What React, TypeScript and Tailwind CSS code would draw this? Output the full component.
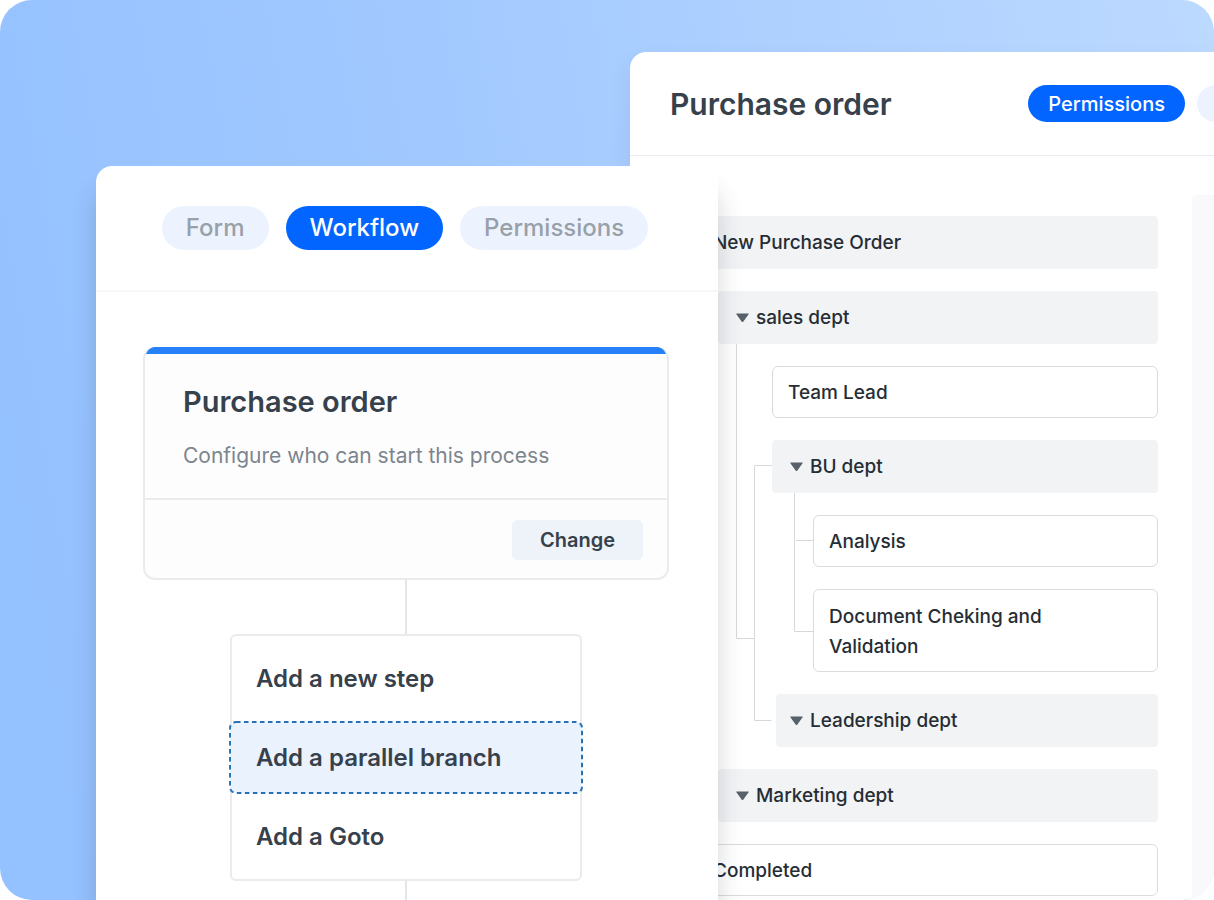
import { useState } from 'react';
import type { ReactNode } from 'react';

const tabs = ['Form', 'Workflow', 'Permissions'];
const stepOptions = ['Add a new step', 'Add a parallel branch', 'Add a Goto'];

const Caret = () => (
  <svg width="13" height="10" viewBox="0 0 13 10" className="shrink-0 text-[#586069]" aria-hidden="true">
    <path d="M0.8 0.4h11.4c.5 0 .7.5.4.9L7.2 8.7c-.4.5-1 .5-1.4 0L.4 1.3C.1.9.3.4.8.4z" fill="currentColor" />
  </svg>
);

const DeptRow = ({ name, inset = false }: { name: string; inset?: boolean }) => (
  <button
    className={`flex h-[53px] items-center gap-[7px] rounded bg-[#f1f3f5] text-left ${
      inset ? 'ml-1 pl-3.5' : 'w-full pl-[18px]'
    }`}
  >
    <Caret />
    <span className="pt-0.5">{name}</span>
  </button>
);

const StepRow = ({ children }: { children: ReactNode }) => (
  <div className="flex min-h-[52px] items-center rounded-md border border-[#d9dcde] bg-white px-[15px] pt-0.5">
    {children}
  </div>
);

// elbow lines that tie the departments below "sales dept" together
const TreeLines = () => (
  <svg
    width="96"
    height="380"
    viewBox="0 0 96 380"
    fill="none"
    stroke="#d5d9db"
    className="absolute top-0 left-0"
    aria-hidden="true"
  >
    <path d="M18.5 0v294.500h18" />
    <path d="M54 121.500h-17.500v255h17" />
    <path d="M76.500 149v138.500h19M78 196.500h17" />
  </svg>
);

function WorkflowPanel() {
  const [tab, setTab] = useState('Workflow');
  const [selected, setSelected] = useState('Add a parallel branch');

  return (
    <section className="z-10 col-start-2 col-end-4 row-start-1 mt-[166px] flex flex-col rounded-t-2xl bg-white shadow-[0_24px_24px_rgba(50,55,65,0.2)]">
      <nav className="flex justify-center gap-[17px] border-b-2 border-[#f6f7f8] pt-10 pr-1 pb-10">
        {tabs.map(name => (
          <button
            key={name}
            onClick={() => setTab(name)}
            className={`h-11 rounded-full px-6 text-2xl font-medium ${
              tab === name ? 'bg-[#0365ff] text-white' : 'bg-[#edf3fe] text-[#98a0a8]'
            }`}
          >
            {name}
          </button>
        ))}
      </nav>

      <div className="flex flex-1 flex-col items-center pt-[55px] pr-[49px] pl-[47px]">
        <article className="w-full overflow-hidden rounded-xl border-2 border-t-0 border-[#e9ebec] bg-[#fdfdfd]">
          <div className="-mx-0.5 h-[7px] bg-[#2680f8]" />
          <div className="border-b-2 border-[#e9ebec] px-[38px] pt-7 pb-[26px]">
            <h2 className="text-[29px] leading-10 font-semibold text-[#36414b]">Purchase order</h2>
            <p className="mt-[18px] text-[21px] leading-8 text-[#7c858d]">Configure who can start this process</p>
          </div>
          <div className="flex justify-end px-6 pt-5 pb-[18px]">
            <button className="h-10 rounded-md bg-[#edf3f9] px-7 text-xl font-semibold text-[#36414b]">
              Change
            </button>
          </div>
        </article>

        <div className="h-[54px] w-0.5 bg-[#e3e5e6]" />

        <div className="flex w-[352px] flex-col gap-1.5 rounded-md border-2 border-[#e9ebec] bg-white py-1.5">
          {stepOptions.map(option => (
            <button
              key={option}
              onClick={() => setSelected(option)}
              className="relative -mx-[3px] flex h-[73px] items-center px-[27px] text-left text-2xl font-semibold text-[#36414b]"
            >
              {selected === option && (
                <svg className="absolute inset-0 size-full" aria-hidden="true">
                  <rect
                    x="1"
                    y="1"
                    rx="6"
                    className="h-[calc(100%-2px)] w-[calc(100%-2px)]"
                    fill="#eaf2fe"
                    stroke="#2a70bd"
                    strokeWidth="2"
                    strokeDasharray="4.500 3.500"
                  />
                </svg>
              )}
              <span className="relative">{option}</span>
            </button>
          ))}
        </div>

        <div className="min-h-4 w-0.5 flex-1 bg-[#e3e5e6]" />
      </div>
    </section>
  );
}

function PermissionsPanel() {
  return (
    <section className="col-start-3 col-end-5 row-start-1 mt-[52px] flex flex-col overflow-hidden rounded-tl-2xl bg-white shadow-[0_12px_24px_rgba(50,55,65,0.08)]">
      <header className="flex h-[104px] shrink-0 items-center border-b border-[#e9ecee] pl-10">
        <h2 className="mr-auto text-3xl font-semibold text-[#36414b]">Purchase order</h2>
        <button className="h-[37px] rounded-full bg-[#0365ff] px-5 text-xl font-medium text-white">
          Permissions
        </button>
        {/* next tab runs off the edge of the panel */}
        <button className="-mr-24 ml-3 h-[37px] w-[113px] shrink-0 rounded-full bg-[#edf3fe]" aria-label="Reports" />
      </header>

      <div className="flex flex-1">
        <div className="flex flex-1 flex-col gap-[22px] pt-[60px] pr-[34px] pb-1 pl-[67px] text-[19px] font-medium text-[#262d34]">
          <div className="flex h-[53px] items-center rounded bg-[#f1f3f5] px-4 pt-0.5">New Purchase Order</div>

          <div className="pl-[21px]">
            <DeptRow name="sales dept" />
            <div className="relative flex flex-col gap-[22px] pt-[22px] pl-[54px]">
              <TreeLines />
              <StepRow>Team Lead</StepRow>
              <div>
                <DeptRow name="BU dept" />
                <div className="flex flex-col gap-[22px] pt-[22px] pl-[41px]">
                  <StepRow>Analysis</StepRow>
                  <StepRow>
                    <p className="max-w-60 pt-2.5 pb-[9px] leading-[30px]">Document Cheking and Validation</p>
                  </StepRow>
                </div>
              </div>
              <DeptRow name="Leadership dept" inset />
            </div>
          </div>

          <div className="pl-[21px]">
            <DeptRow name="Marketing dept" />
          </div>
          <StepRow>Completed</StepRow>
        </div>
        <div className="mt-[39px] w-[22px] rounded-tl bg-[#f9f9fb]" />
      </div>
    </section>
  );
}

export default function App() {
  return (
    <main className="grid min-h-screen grid-cols-[96px_534fr_88fr_496fr] overflow-hidden rounded-[32px] bg-[linear-gradient(80deg,#94c1ff_5%,#a0c8ff_38%,#bcd9ff_100%)] font-['Inter',sans-serif]">
      <PermissionsPanel />
      <WorkflowPanel />
    </main>
  );
}
